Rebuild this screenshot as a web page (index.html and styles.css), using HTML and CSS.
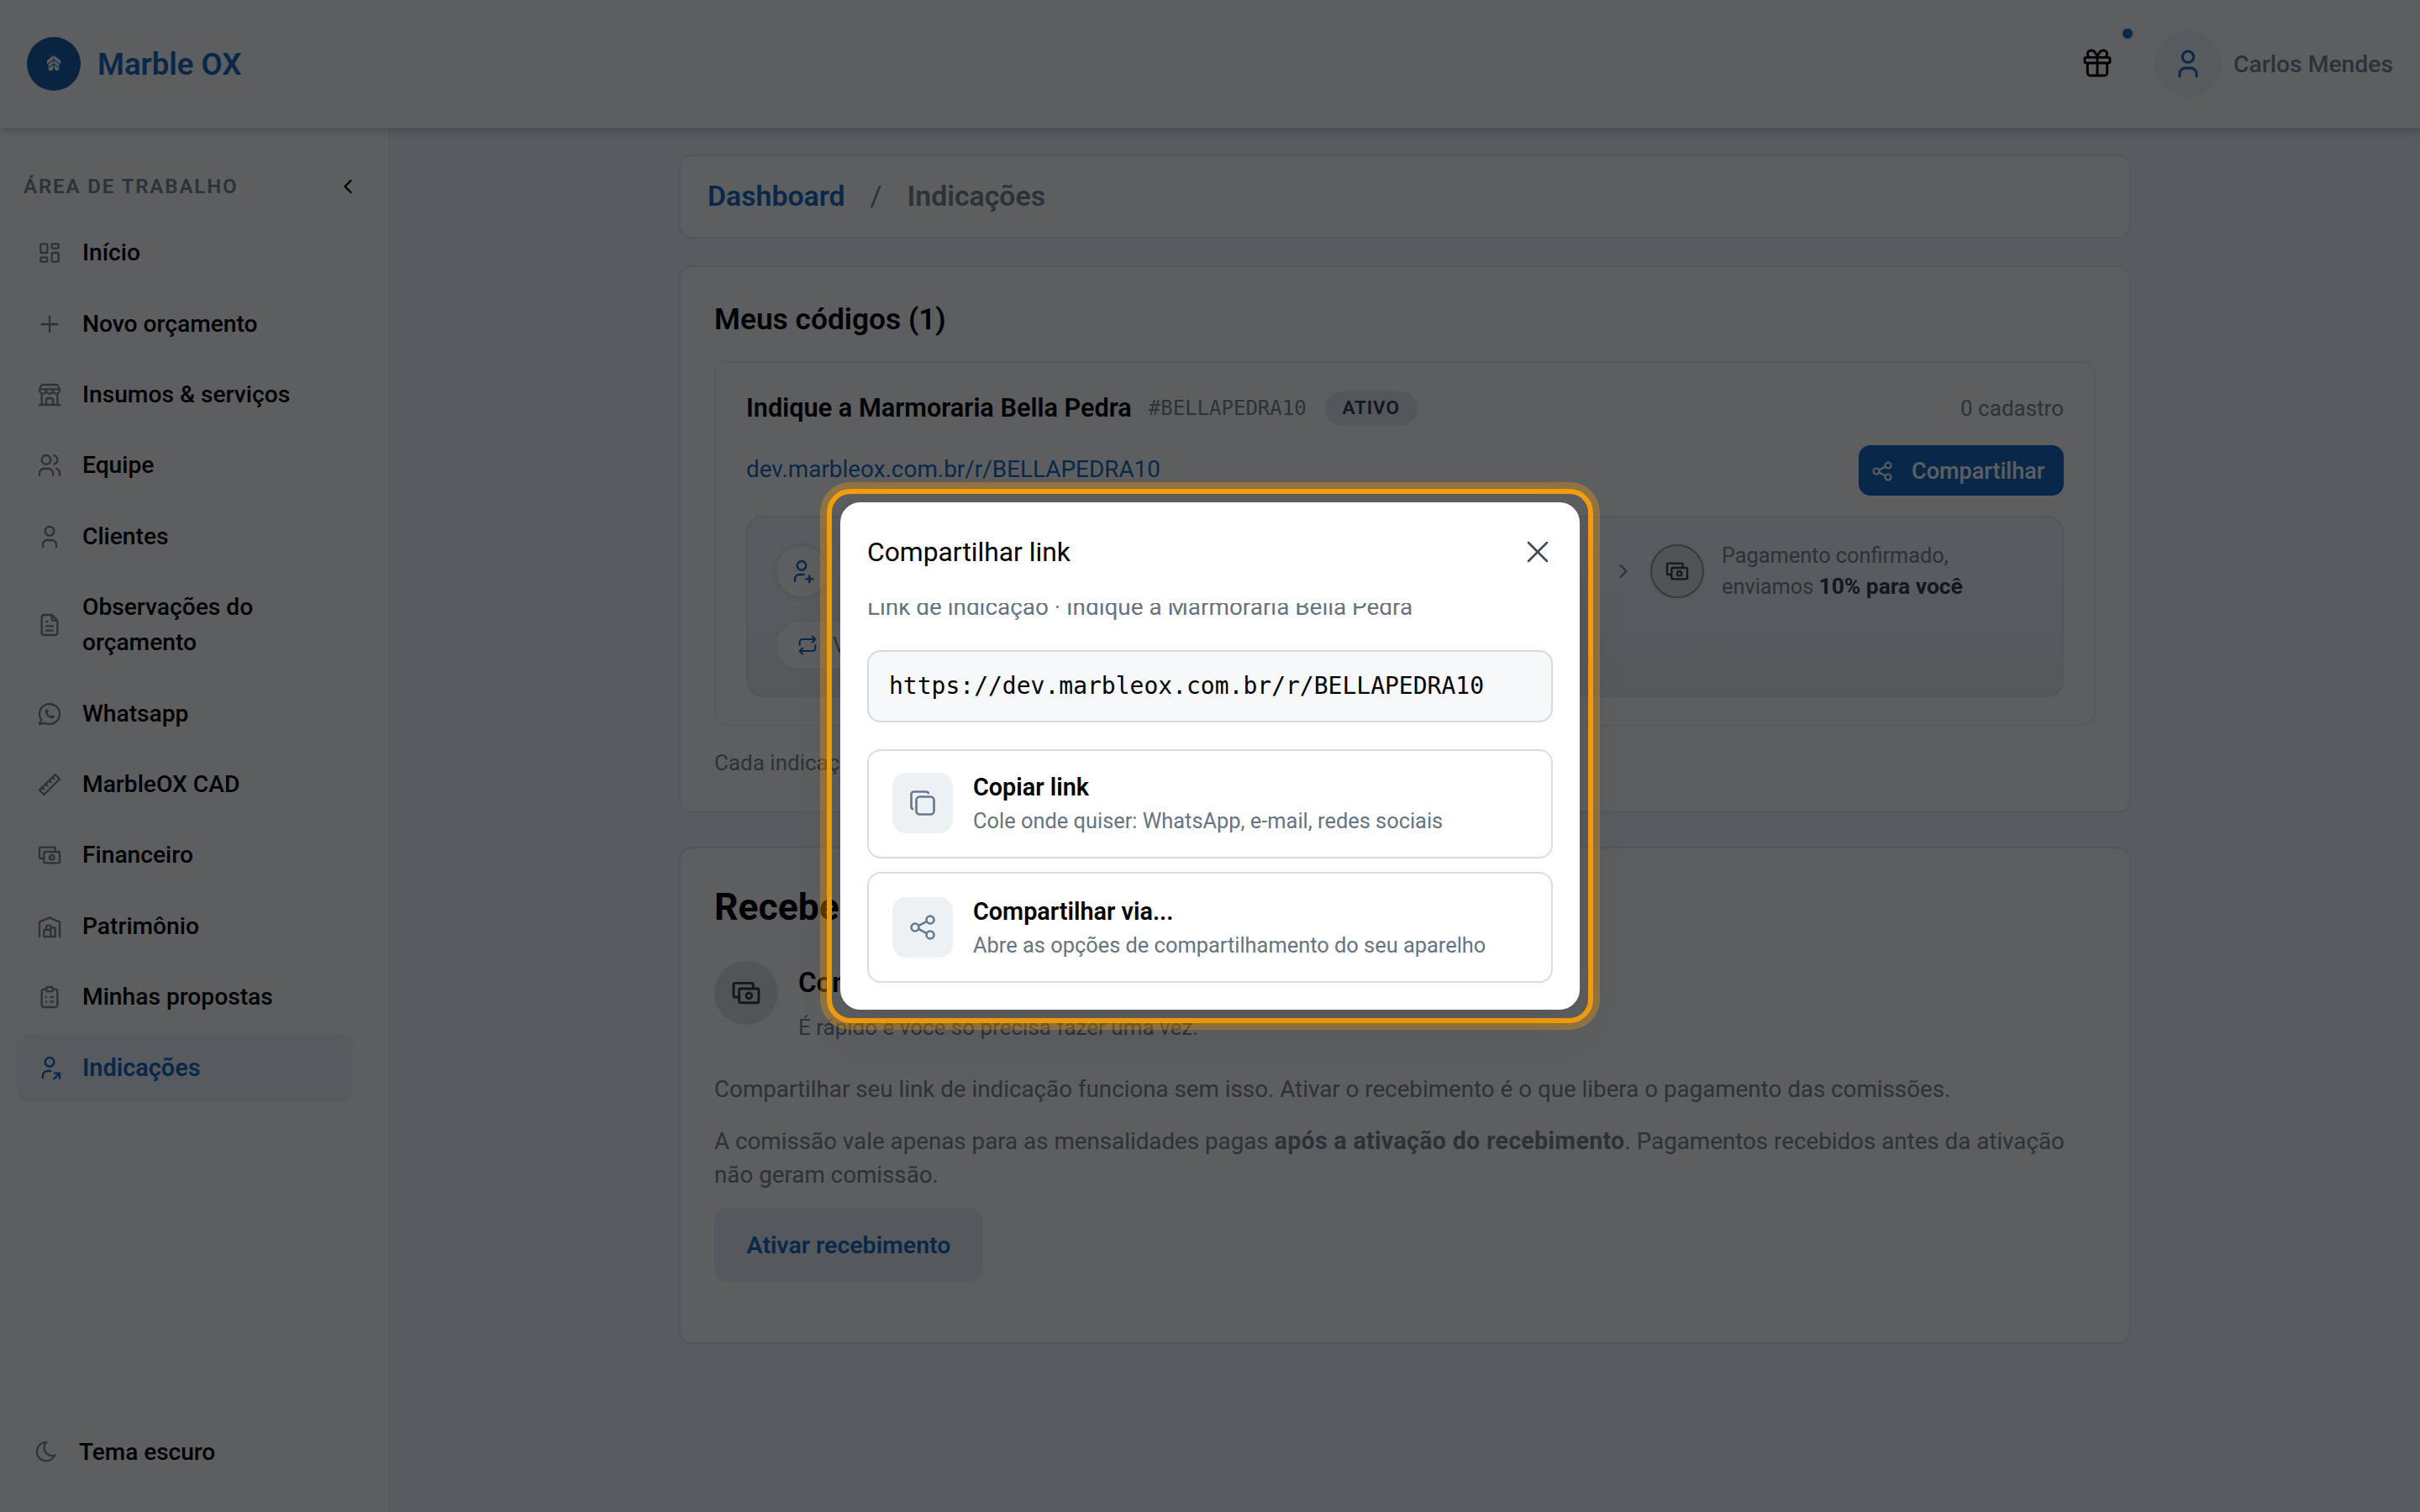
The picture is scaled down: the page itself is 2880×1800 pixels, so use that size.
FILE: index.html
```html
<!DOCTYPE html>
<html lang="pt-BR">
<head>
    <meta charset="UTF-8">
    <meta name="viewport" content="width=device-width, initial-scale=1.0">
    <title>Marble OX - Indicações</title>
    <link rel="stylesheet" href="styles.css">
</head>
<body>
    <!-- shared icons -->
    <svg class="sprite">
        <symbol id="i-user" viewBox="0 0 24 24"><path d="M8 7a4 4 0 1 0 8 0a4 4 0 1 0 -8 0M6 21v-2a4 4 0 0 1 4 -4h4a4 4 0 0 1 4 4v2"/></symbol>
        <symbol id="i-cash" viewBox="0 0 24 24"><path d="M7 15h-3a1 1 0 0 1 -1 -1v-8a1 1 0 0 1 1 -1h12a1 1 0 0 1 1 1v3M7 10a1 1 0 0 1 1 -1h12a1 1 0 0 1 1 1v8a1 1 0 0 1 -1 1h-12a1 1 0 0 1 -1 -1zM12 14a2 2 0 1 0 4 0a2 2 0 1 0 -4 0"/></symbol>
        <symbol id="i-share" viewBox="0 0 24 24"><path d="M3 12a3 3 0 1 0 6 0a3 3 0 1 0 -6 0M15 6a3 3 0 1 0 6 0a3 3 0 1 0 -6 0M15 18a3 3 0 1 0 6 0a3 3 0 1 0 -6 0M8.7 10.7l6.6 -3.4M8.7 13.3l6.6 3.4"/></symbol>
        <symbol id="i-right" viewBox="0 0 24 24"><path d="M9 6l6 6l-6 6"/></symbol>
        <symbol id="i-user-plus" viewBox="0 0 24 24"><path d="M8 7a4 4 0 1 0 8 0a4 4 0 0 0 -8 0M16 19h6M19 16v6M6 21v-2a4 4 0 0 1 4 -4h4"/></symbol>
    </svg>

    <header class="topbar">
        <div class="brand">
            <span class="brand-logo">
                <svg viewBox="0 0 16 19"><path d="M7.6 0V4.6L0 10.4V6z"/><path d="M8.4 0V4.6L16 10.4V6z"/><path d="M7.6 6V9.6L1.6 14V10.6z"/><path d="M8.4 6V9.6L14.4 14V10.6z"/><path d="M7.4 11V15.5L5 18.6L1.6 17V15z"/><path d="M8.6 11V15.5L11 18.6L14.4 17V15z"/></svg>
            </span>
            <span class="brand-name">Marble OX</span>
        </div>
        <div class="top-actions">
            <button class="gift-button">
                <svg class="icon" viewBox="0 0 24 24"><path d="M3 9a1 1 0 0 1 1 -1h16a1 1 0 0 1 1 1v2a1 1 0 0 1 -1 1h-16a1 1 0 0 1 -1 -1zM12 8v13M19 12v7a2 2 0 0 1 -2 2h-10a2 2 0 0 1 -2 -2v-7M7.5 8a2.5 2.5 0 0 1 0 -5a4.8 8 0 0 1 4.5 5a4.8 8 0 0 1 4.5 -5a2.5 2.5 0 0 1 0 5"/></svg>
                <span class="dot"></span>
            </button>
            <span class="avatar"><svg class="icon"><use href="#i-user"/></svg></span>
            <span class="user-name">Carlos Mendes</span>
        </div>
    </header>

    <div class="layout">
        <aside class="sidebar">
            <div class="sidebar-head">
                <span>ÁREA DE TRABALHO</span>
                <svg class="icon" viewBox="0 0 24 24"><path d="M15 6l-6 6l6 6"/></svg>
            </div>
            <nav class="nav">
                <a class="nav-item"><svg class="icon" viewBox="0 0 24 24"><path d="M5 4h4a1 1 0 0 1 1 1v6a1 1 0 0 1 -1 1h-4a1 1 0 0 1 -1 -1v-6a1 1 0 0 1 1 -1M5 16h4a1 1 0 0 1 1 1v2a1 1 0 0 1 -1 1h-4a1 1 0 0 1 -1 -1v-2a1 1 0 0 1 1 -1M15 12h4a1 1 0 0 1 1 1v6a1 1 0 0 1 -1 1h-4a1 1 0 0 1 -1 -1v-6a1 1 0 0 1 1 -1M15 4h4a1 1 0 0 1 1 1v2a1 1 0 0 1 -1 1h-4a1 1 0 0 1 -1 -1v-2a1 1 0 0 1 1 -1"/></svg><span>Início</span></a>
                <a class="nav-item"><svg class="icon" viewBox="0 0 24 24"><path d="M12 5v14M5 12h14"/></svg><span>Novo orçamento</span></a>
                <a class="nav-item"><svg class="icon" viewBox="0 0 24 24"><path d="M3 21h18M3 7v1a3 3 0 0 0 6 0v-1m0 1a3 3 0 0 0 6 0v-1m0 1a3 3 0 0 0 6 0v-1h-18l2 -4h14l2 4M5 21v-10.15M19 21v-10.15M9 21v-4a2 2 0 0 1 2 -2h2a2 2 0 0 1 2 2v4"/></svg><span>Insumos &amp; serviços</span></a>
                <a class="nav-item"><svg class="icon" viewBox="0 0 24 24"><path d="M5 7a4 4 0 1 0 8 0a4 4 0 1 0 -8 0M3 21v-2a4 4 0 0 1 4 -4h4a4 4 0 0 1 4 4v2M16 3.13a4 4 0 0 1 0 7.75M21 21v-2a4 4 0 0 0 -3 -3.85"/></svg><span>Equipe</span></a>
                <a class="nav-item"><svg class="icon"><use href="#i-user"/></svg><span>Clientes</span></a>
                <a class="nav-item"><svg class="icon" viewBox="0 0 24 24"><path d="M14 3v4a1 1 0 0 0 1 1h4M17 21h-10a2 2 0 0 1 -2 -2v-14a2 2 0 0 1 2 -2h7l5 5v11a2 2 0 0 1 -2 2zM9 9h1M9 13h6M9 17h6"/></svg><span>Observações do orçamento</span></a>
                <a class="nav-item"><svg class="icon" viewBox="0 0 24 24"><path d="M3 21l1.65 -3.8a9 9 0 1 1 3.4 2.9l-5.05 .9M9 10a.5 .5 0 0 0 1 0v-1a.5 .5 0 0 0 -1 0v1a5 5 0 0 0 5 5h1a.5 .5 0 0 0 0 -1h-1a.5 .5 0 0 0 0 1"/></svg><span>Whatsapp</span></a>
                <a class="nav-item"><svg class="icon" viewBox="0 0 24 24"><path d="M17 3l4 4l-14 14l-4 -4zM16 7l-1.5 -1.5M13 10l-1.5 -1.5M10 13l-1.5 -1.5M7 16l-1.5 -1.5"/></svg><span>MarbleOX CAD</span></a>
                <a class="nav-item"><svg class="icon"><use href="#i-cash"/></svg><span>Financeiro</span></a>
                <a class="nav-item"><svg class="icon" viewBox="0 0 24 24"><path d="M3 21v-13l9 -4l9 4v13M13 13h4v8h-10v-6h6M13 21v-9a1 1 0 0 0 -1 -1h-2a1 1 0 0 0 -1 1v3"/></svg><span>Patrimônio</span></a>
                <a class="nav-item"><svg class="icon" viewBox="0 0 24 24"><path d="M9 5h-2a2 2 0 0 0 -2 2v12a2 2 0 0 0 2 2h10a2 2 0 0 0 2 -2v-12a2 2 0 0 0 -2 -2h-2M9 5a2 2 0 0 1 2 -2h2a2 2 0 0 1 2 2a2 2 0 0 1 -2 2h-2a2 2 0 0 1 -2 -2zM9 12h.01M13 12h2M9 16h.01M13 16h2"/></svg><span>Minhas propostas</span></a>
                <a class="nav-item active"><svg class="icon" viewBox="0 0 24 24"><path d="M8 7a4 4 0 1 0 8 0a4 4 0 0 0 -8 0M6 21v-2a4 4 0 0 1 4 -4h3M16 22l5 -5M21 21.5v-4.5h-4.5"/></svg><span>Indicações</span></a>
            </nav>
            <a class="theme-toggle"><svg class="icon" viewBox="0 0 24 24"><path d="M12 3c.132 0 .263 0 .393 0a7.5 7.5 0 0 0 7.92 12.446a9 9 0 1 1 -8.313 -12.454z"/></svg><span>Tema escuro</span></a>
        </aside>

        <main class="content">
            <div class="card breadcrumb">
                <a>Dashboard</a>
                <span class="sep">/</span>
                <span class="current">Indicações</span>
            </div>

            <section class="card codes">
                <h2>Meus códigos (1)</h2>
                <div class="code-card">
                    <div class="code-head">
                        <span class="code-title">Indique a Marmoraria Bella Pedra</span>
                        <span class="code-tag">#BELLAPEDRA10</span>
                        <span class="badge">ATIVO</span>
                        <span class="count">0 cadastro</span>
                    </div>
                    <div class="code-link">
                        <a>dev.marbleox.com.br/r/BELLAPEDRA10</a>
                        <button class="share-button"><svg class="icon"><use href="#i-share"/></svg>Compartilhar</button>
                    </div>
                    <div class="flow">
                        <div class="flow-steps">
                            <div class="step">
                                <span class="step-icon"><svg class="icon"><use href="#i-user-plus"/></svg></span>
                            </div>
                            <div class="step last">
                                <svg class="icon arrow"><use href="#i-right"/></svg>
                                <span class="step-icon gray"><svg class="icon"><use href="#i-cash"/></svg></span>
                                <p>Pagamento confirmado,<br>enviamos <b>10% para você</b></p>
                            </div>
                        </div>
                        <div class="flow-pill">
                            <svg class="icon" viewBox="0 0 24 24"><path d="M4 12v-3a3 3 0 0 1 3 -3h13m-3 -3l3 3l-3 3M20 12v3a3 3 0 0 1 -3 3h-13m3 3l-3 -3l3 -3"/></svg>
                            <span>Vale todo mês</span>
                        </div>
                    </div>
                </div>
                <p class="note">Cada indicação gera comissão.</p>
            </section>

            <section class="card payout">
                <h1>Receber comissões</h1>
                <div class="payout-head">
                    <span class="payout-icon"><svg class="icon"><use href="#i-cash"/></svg></span>
                    <div>
                        <h3>Configure o recebimento</h3>
                        <p>É rápido e você só precisa fazer uma vez.</p>
                    </div>
                </div>
                <p class="text">Compartilhar seu link de indicação funciona sem isso. Ativar o recebimento é o que libera o pagamento das comissões.</p>
                <p class="text">A comissão vale apenas para as mensalidades pagas <b>após a ativação do recebimento</b>. Pagamentos recebidos antes da ativação não geram comissão.</p>
                <button class="activate-button">Ativar recebimento</button>
            </section>
        </main>
    </div>

    <div class="overlay">
        <div class="highlight">
            <div class="modal">
                <div class="modal-head">
                    <span>Compartilhar link</span>
                    <svg class="icon" viewBox="0 0 24 24"><path d="M18 6l-12 12M6 6l12 12"/></svg>
                </div>
                <div class="modal-body">
                    <p class="modal-sub">Link de indicação · Indique a Marmoraria Bella Pedra</p>
                    <div class="url-box">https://dev.marbleox.com.br/r/BELLAPEDRA10</div>
                    <button class="option">
                        <span class="option-icon"><svg class="icon" viewBox="0 0 24 24"><path d="M7 9.667a2.667 2.667 0 0 1 2.667 -2.667h8.666a2.667 2.667 0 0 1 2.667 2.667v8.666a2.667 2.667 0 0 1 -2.667 2.667h-8.666a2.667 2.667 0 0 1 -2.667 -2.667zM4.012 16.737a2.005 2.005 0 0 1 -1.012 -1.737v-10c0 -1.1 .9 -2 2 -2h10c.75 0 1.158 .385 1.5 1"/></svg></span>
                        <span class="option-text"><b>Copiar link</b><small>Cole onde quiser: WhatsApp, e-mail, redes sociais</small></span>
                    </button>
                    <button class="option">
                        <span class="option-icon"><svg class="icon"><use href="#i-share"/></svg></span>
                        <span class="option-text"><b>Compartilhar via...</b><small>Abre as opções de compartilhamento do seu aparelho</small></span>
                    </button>
                </div>
            </div>
        </div>
    </div>
</body>
</html>
```
FILE: styles.css
```css
* {
    box-sizing: border-box;
}
body {
    margin: 0;
    height: 1800px;
    overflow: hidden;
    display: flex;
    flex-direction: column;
    font-family: Roboto, sans-serif;
    font-size: 28px;
    color: #000;
    background: #f1f7fd;
}
h1, h2, h3, p {
    margin: 0;
}
button {
    font-family: inherit;
    border: none;
    background: none;
    padding: 0;
}
b {
    font-weight: 600;
}
.sprite {
    display: none;
}
.icon {
    width: 32px;
    height: 32px;
    flex-shrink: 0;
    fill: none;
    stroke: currentColor;
    stroke-width: 1.75;
    stroke-linecap: round;
    stroke-linejoin: round;
}

/* top bar */
.topbar {
    height: 152px;
    flex-shrink: 0;
    padding: 0 32px;
    display: flex;
    align-items: center;
    justify-content: space-between;
    background: #fff;
    box-shadow: 0 4px 10px rgba(0, 0, 0, 0.2);
    z-index: 1;
}
.brand {
    display: flex;
    align-items: center;
    gap: 20px;
}
.brand-logo {
    width: 64px;
    height: 64px;
    border-radius: 50%;
    background: #1a62a8;
    display: flex;
    align-items: center;
    justify-content: center;
}
.brand-logo svg {
    width: 16px;
    height: 19px;
    margin-top: -2px;
    fill: #fff;
}
.brand-name {
    font-size: 36.5px;
    font-weight: 600;
    color: #1a6cbf;
}
.top-actions {
    display: flex;
    align-items: center;
}
.gift-button {
    position: relative;
    width: 80px;
    height: 80px;
    margin-right: 28px;
    color: #000;
}
.gift-button .icon {
    width: 40px;
    height: 40px;
}
.dot {
    position: absolute;
    top: -4px;
    right: -4px;
    width: 16px;
    height: 16px;
    border: 2px solid #e9eef5;
    border-radius: 50%;
    background: #1a6cbf;
}
.avatar {
    width: 80px;
    height: 80px;
    border-radius: 50%;
    background: #eef4fa;
    color: #1a6cbf;
    display: flex;
    align-items: center;
    justify-content: center;
}
.avatar .icon {
    width: 40px;
    height: 40px;
}
.user-name {
    margin-left: 14px;
    font-size: 28.3px;
    font-weight: 500;
    color: #7a8690;
}

/* sidebar */
.layout {
    flex: 1;
    display: flex;
}
.sidebar {
    width: 464px;
    padding: 48px 42px 48px 20px;
    display: flex;
    flex-direction: column;
    background: #fff;
    border-right: 2px solid #eef1f8;
}
.sidebar-head {
    display: flex;
    align-items: center;
    justify-content: space-between;
    height: 44px;
    margin-left: 8px;
    margin-right: -8px;
    font-size: 24px;
    font-weight: 600;
    letter-spacing: 1.9px;
    color: #7a8690;
}
.sidebar-head .icon {
    width: 28px;
    height: 28px;
    color: #000;
    stroke-width: 2;
}
.nav {
    display: flex;
    flex-direction: column;
    gap: 4px;
    margin-top: 17px;
}
.nav-item {
    display: flex;
    align-items: center;
    gap: 23px;
    min-height: 80.4px;
    padding: 19.2px 60px 19.2px 23px;
    border-radius: 16px;
    font-size: 28.2px;
    font-weight: 500;
    line-height: 42px;
}
.nav-item .icon {
    color: #7a8690;
}
.nav-item.active {
    background: #eff5fb;
    color: #1a6cbf;
    font-size: 28.9px;
    font-weight: 600;
}
.nav-item.active .icon {
    color: #1a6cbf;
}
.theme-toggle {
    margin-top: auto;
    padding: 0 0 0 20px;
    display: flex;
    align-items: center;
    gap: 24px;
    height: 48px;
    font-weight: 500;
}
.theme-toggle .icon {
    width: 30px;
    height: 30px;
    color: #7a8690;
}

/* main */
.content {
    flex: 1;
    display: flex;
    flex-direction: column;
    align-items: center;
    padding-top: 32px;
}
.card {
    width: 1728px;
    background: #fff;
    border: 2px solid #e2e8ee;
    border-radius: 16px;
}
.breadcrumb {
    height: 100px;
    padding: 0 32px 2px;
    display: flex;
    align-items: center;
    gap: 30px;
    font-size: 33.8px;
    font-weight: 600;
    color: #7a8690;
}
.breadcrumb a {
    color: #1a6cbf;
}
.sep {
    font-weight: 400;
}
.codes {
    height: 652px;
    margin-top: 32px;
    padding: 40px;
}
.codes h2 {
    font-size: 35.3px;
    font-weight: 600;
    line-height: 44px;
}
.code-card {
    height: 434px;
    margin-top: 28px;
    padding: 34px 36px;
    border: 2px solid #edf0f6;
    border-radius: 16px;
}
.code-head {
    display: flex;
    align-items: center;
    height: 40px;
}
.code-title {
    margin-top: -1px;
    font-size: 30.7px;
    font-weight: 600;
}
.code-tag {
    margin-left: 20px;
    font-family: "DejaVu Sans Mono", monospace;
    font-size: 24px;
    color: #7a8690;
}
.badge {
    margin-left: 22px;
    width: 110px;
    height: 40px;
    border-radius: 20px;
    background: #e4e9ee;
    color: #34404c;
    font-size: 22.5px;
    font-weight: 600;
    line-height: 38px;
    letter-spacing: 0.9px;
    text-align: center;
}
.count {
    margin-left: auto;
    font-size: 26px;
    color: #7a8690;
}
.code-link {
    display: flex;
    justify-content: space-between;
    margin-top: 24px;
    font-size: 27.9px;
    line-height: 57px;
    color: #1a6cbf;
}
.share-button {
    width: 244px;
    height: 60px;
    padding: 1px 0 0 14px;
    display: flex;
    align-items: center;
    gap: 21px;
    border-radius: 14px;
    background: #1a6cbf;
    color: #fff;
    font-size: 27px;
    font-weight: 500;
}
.share-button .icon {
    width: 28px;
    height: 28px;
}
.flow {
    height: 216px;
    margin-top: 24px;
    padding: 32px;
    border: 2px solid #e4e8f0;
    border-radius: 20px;
    background: linear-gradient(#f1f6fd, #f1f6fd 40%, #e9eef2);
}
.flow-steps {
    display: flex;
    justify-content: space-between;
}
.step {
    display: flex;
    align-items: center;
    height: 64px;
    font-size: 25.3px;
    line-height: 36px;
    color: #7a8690;
}
.step b {
    font-size: 26.4px;
    font-weight: 700;
    color: #34404c;
}
.step.last {
    width: 506px;
}
.step.last p {
    margin-left: 21px;
}
.step-icon {
    width: 64px;
    height: 64px;
    display: flex;
    align-items: center;
    justify-content: center;
    border: 2px solid #e4e8f0;
    border-radius: 50%;
    background: #fff;
    color: #1a6cbf;
    box-shadow: 0 2px 6px rgba(0, 0, 0, 0.08);
}
.step-icon.gray {
    background: #dde2e6;
    border-color: #929da6;
    color: #34404c;
}
.arrow {
    width: 28px;
    height: 28px;
    margin: 0 18px 0 2px;
}
.flow-pill {
    display: inline-flex;
    align-items: center;
    gap: 16px;
    height: 60px;
    margin-top: 26px;
    padding: 0 30px 0 23px;
    border: 2px solid #e4e8f0;
    border-radius: 30px;
    background: #fff;
    font-size: 26px;
    color: #7a8690;
}
.flow-pill .icon {
    width: 28px;
    height: 28px;
    color: #1a6cbf;
}
.note {
    margin-top: 28px;
    font-size: 26px;
    line-height: 32px;
    color: #7a8690;
}
.payout {
    height: 592px;
    margin-top: 40px;
    padding: 42px 40px;
    color: #7a8690;
}
.payout h1 {
    font-size: 44.5px;
    font-weight: 700;
    line-height: 56px;
    color: #000;
}
.payout-head {
    display: flex;
    gap: 24px;
    margin-top: 32px;
}
.payout-icon {
    width: 76px;
    height: 76px;
    margin-top: 4px;
    display: flex;
    align-items: center;
    justify-content: center;
    border-radius: 50%;
    background: #dfe5ea;
    color: #34404c;
}
.payout-icon .icon {
    width: 40px;
    height: 40px;
}
.payout h3 {
    margin-top: 8px;
    font-size: 33px;
    font-weight: 600;
    line-height: 44px;
    color: #000;
}
.payout-head p {
    margin-top: 11px;
    font-size: 26px;
    line-height: 40px;
}
.text {
    margin-top: 22px;
    font-size: 27.75px;
    line-height: 40px;
}
.text b {
    font-size: 28.6px;
    font-weight: 700;
    letter-spacing: 0.3px;
    line-height: 1;
}
.payout-head + .text {
    margin-top: 34px;
}
.activate-button {
    width: 320px;
    height: 88px;
    margin-top: 19px;
    border-radius: 16px;
    background: #e9eef4;
    color: #1a6cbf;
    font-size: 28.5px;
    font-weight: 600;
}

/* share modal */
.overlay {
    position: absolute;
    inset: 0;
    z-index: 2;
    display: flex;
    align-items: center;
    justify-content: center;
    background: rgba(0, 2, 4, 0.637);
}
.highlight {
    padding: 10px;
    border: 6px solid #f59e0b;
    border-radius: 28px;
    box-shadow: 0 0 0 8px rgba(245, 158, 11, 0.35);
}
.modal {
    width: 880px;
    height: 604px;
    border-radius: 24px;
    background: #fff;
    box-shadow: 0 20px 60px rgba(0, 0, 0, 0.08);
}
.modal-head {
    height: 120px;
    padding: 0 28px 3px 32px;
    display: flex;
    align-items: center;
    justify-content: space-between;
    font-size: 31.8px;
}
.modal-head .icon {
    width: 44px;
    height: 44px;
    stroke-width: 1.4;
    color: #404a54;
}
.modal-body {
    height: 484px;
    padding: 0 32px;
    overflow: hidden;
}
.modal-sub {
    margin-top: -16px;
    font-size: 27.9px;
    line-height: 42px;
    color: #687380;
}
.url-box {
    height: 86px;
    margin-top: 30px;
    padding: 0 24px;
    border: 2px solid #d3d9df;
    border-radius: 16px;
    background: #f6f8fa;
    font-family: "DejaVu Sans Mono", monospace;
    font-size: 28px;
    line-height: 82px;
}
.option {
    width: 100%;
    height: 130px;
    margin-top: 16px;
    padding: 0 28px 2px;
    display: flex;
    align-items: center;
    gap: 24px;
    border: 2px solid #d7dde3;
    border-radius: 16px;
    text-align: left;
}
.url-box + .option {
    margin-top: 32px;
}
.option:last-child {
    height: 132px;
    padding-bottom: 0;
}
.option-icon {
    width: 72px;
    height: 72px;
    display: flex;
    align-items: center;
    justify-content: center;
    border-radius: 16px;
    background: #eef1f4;
    color: #64798f;
}
.option-icon .icon {
    width: 36px;
    height: 36px;
}
.option-text {
    display: flex;
    flex-direction: column;
}
.option-text b {
    font-size: 28.8px;
    line-height: 42px;
    color: #000;
}
.option-text small {
    font-size: 25.4px;
    line-height: 38px;
    color: #687380;
}
```
